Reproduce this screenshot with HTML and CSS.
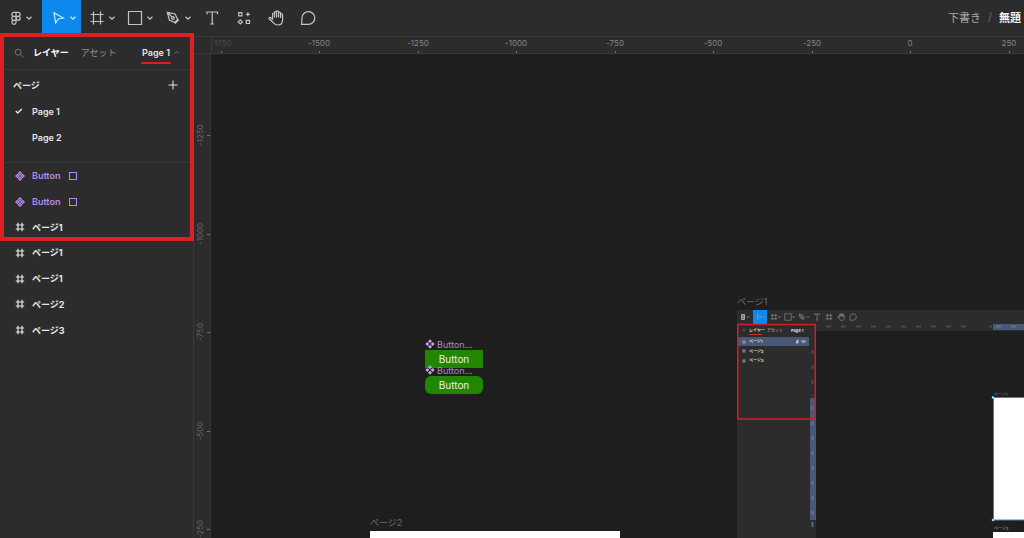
FILE: index.html
```html
<!DOCTYPE html>
<html lang="ja">
<head>
<meta charset="utf-8">
<meta name="viewport" content="width=device-width, initial-scale=1">
<title>無題</title>
<link rel="stylesheet" href="styles.css">
</head>
<body>
<svg class="defs" aria-hidden="true">
  <symbol id="chev" viewBox="0 0 8 8"><path d="M1.500 2.800 4 5.200l2.500-2.400"/></symbol>
  <symbol id="hash" viewBox="0 0 10 10"><path d="M3 .8v8.400M7 .8v8.400M.8 3h8.400M.8 7h8.400"/></symbol>
  <symbol id="comp" viewBox="0 0 10 10"><path class="solid" d="M5 .3 7 2.300 5 4.300 3 2.300zM5 5.700l2 2-2 2-2-2zM2.300 3l2 2-2 2-2-2zM7.700 3l2 2-2 2-2-2z"/></symbol>
  <symbol id="comp-open" viewBox="0 0 10 10"><path d="M5 .8 6.500 2.300 5 3.800 3.500 2.300zM5 6.200l1.500 1.500L5 9.200 3.500 7.700zM2.300 3.500 3.800 5 2.300 6.500.8 5zM7.700 3.500 9.200 5 7.700 6.500 6.200 5z"/></symbol>
  <symbol id="frame" viewBox="0 0 16 16"><path d="M4.500 1.500v13M11.500 1.500v13M1.500 4.500h13M1.500 11.500h13"/></symbol>
  <symbol id="cursor" viewBox="0 0 16 16"><path d="M4 2.700 13.300 8 8.400 9 5.700 13z"/></symbol>
  <symbol id="square" viewBox="0 0 16 16"><path d="M1.500 1.500h13v13h-13z"/></symbol>
  <symbol id="pen" viewBox="0 0 16 16"><path d="M2.300 2.300 10 4l2.700 5.300-3 3.200L4.400 10zM2.300 2.300 7 7M13.800 9.600 10 13.600"/><circle cx="8" cy="8" r="1.300"/></symbol>
  <symbol id="text" viewBox="0 0 16 16"><path d="M3 4.300V2h10.500v2.300M8.200 2v12M6.200 14h4"/></symbol>
  <symbol id="hand" viewBox="0 0 16 16"><path d="M4.600 9.600V4.100c0-1.300 2-1.300 2 0V2.300c0-1.300 2-1.300 2 0v-.5c0-1.300 2-1.300 2 0v1.300c0-1.300 2-1.300 2 0v1.700c0-1.300 2-1.300 2 0V10c0 3-2 5-4.600 5-2.600 0-4-1.300-5.200-3L1.300 9c-.7-1.300.8-2.200 1.800-1.200l1.500 1.800M6.600 3v4.500M8.600 2.300v5.200M10.600 3v4.500M12.600 4.500V8"/></symbol>
  <symbol id="bubble" viewBox="0 0 16 16"><path d="M1.600 14.400 2 8a6.400 6.400 0 1 1 6.400 6.400z"/></symbol>
</svg>

<header class="topbar">
  <nav class="tools" aria-label="ツール">
    <button class="tool first" aria-label="メインメニュー">
      <svg class="icon" viewBox="0 0 16 16"><path d="M8 2.300H5.800a2 2 0 0 0 0 4H8zM8 2.300h2.200a2 2 0 0 1 0 4H8zM8 6.300H5.800a2 2 0 0 0 0 4H8zM8 10.300H5.800a2 2 0 1 0 2.200 2z"/><circle cx="10.200" cy="8.300" r="2"/></svg>
      <svg class="chev"><use href="#chev"/></svg>
    </button>
    <button class="tool active" aria-label="移動" aria-pressed="true"><svg class="icon"><use href="#cursor"/></svg><svg class="chev"><use href="#chev"/></svg></button>
    <button class="tool" aria-label="フレーム"><svg class="icon"><use href="#frame"/></svg><svg class="chev"><use href="#chev"/></svg></button>
    <button class="tool" aria-label="長方形"><svg class="icon"><use href="#square"/></svg><svg class="chev"><use href="#chev"/></svg></button>
    <button class="tool" aria-label="ペン"><svg class="icon"><use href="#pen"/></svg><svg class="chev"><use href="#chev"/></svg></button>
    <button class="tool single" aria-label="テキスト"><svg class="icon"><use href="#text"/></svg></button>
    <button class="tool single" aria-label="リソース">
      <svg class="icon" viewBox="0 0 16 16"><path d="M2.700 2.700h3.200v3.200H2.700zM10.300 10.300h3.200v3.200h-3.200zM4.300 9.800l2.100 2.100-2.100 2.100-2.100-2.100zM11.900 2.300v4M9.900 4.300h4"/></svg>
    </button>
    <button class="tool single" aria-label="手のひら"><svg class="icon"><use href="#hand"/></svg></button>
    <button class="tool single" aria-label="コメント"><svg class="icon"><use href="#bubble"/></svg></button>
  </nav>
  <div class="crumbs"><a href="#drafts">下書き</a><span class="slash">/</span><strong>無題</strong></div>
</header>

<main class="work">
  <aside class="panel">
    <div class="tabs">
      <button class="search" aria-label="検索"><svg viewBox="0 0 10 10"><circle cx="4.200" cy="4.200" r="3"/><path d="m6.500 6.500 3 3"/></svg></button>
      <button class="tab current">レイヤー</button>
      <button class="tab">アセット</button>
      <button class="page-switch"><span class="marked">Page 1</span><svg class="up"><use href="#chev"/></svg></button>
    </div>
    <section class="pages">
      <div class="pages-head"><h2>ページ</h2><button class="add" aria-label="ページを追加"><svg viewBox="0 0 10 10"><path d="M5 .5v9M.5 5h9"/></svg></button></div>
      <ul>
        <li><a class="row" href="#page1"><svg class="mark" viewBox="0 0 10 10"><path d="m1.800 5 2 2 4-4"/></svg>Page 1</a></li>
        <li><a class="row" href="#page2"><span class="mark"></span>Page 2</a></li>
      </ul>
    </section>
    <ul class="layers">
      <li><a class="row purple" href="#b1"><svg class="mark"><use href="#comp-open"/></svg>Button<span class="swatch"></span></a></li>
      <li><a class="row purple" href="#b2"><svg class="mark"><use href="#comp-open"/></svg>Button<span class="swatch"></span></a></li>
      <li><a class="row jp" href="#f1"><svg class="mark"><use href="#hash"/></svg>ページ1</a></li>
      <li><a class="row jp" href="#f2"><svg class="mark"><use href="#hash"/></svg>ページ1</a></li>
      <li><a class="row jp" href="#f3"><svg class="mark"><use href="#hash"/></svg>ページ1</a></li>
      <li><a class="row jp" href="#f4"><svg class="mark"><use href="#hash"/></svg>ページ2</a></li>
      <li><a class="row jp" href="#f5"><svg class="mark"><use href="#hash"/></svg>ページ3</a></li>
    </ul>
  </aside>

  <div class="stage">
    <div class="corner"></div>
    <svg class="ruler-x" aria-hidden="true">
      <g class="ticks"><path d="M9.500 14v3M107.500 14v3M206.500 14v3M304.500 14v3M403.500 14v3M501.500 14v3M600.500 14v3M698.500 14v3M797.500 14v3"/></g>
      <text class="dim" x="9" y="9">-1750</text><text x="107" y="9">-1500</text><text x="206" y="9">-1250</text><text x="304" y="9">-1000</text><text x="403" y="9">-750</text><text x="501" y="9">-500</text><text x="600" y="9">-250</text><text x="698" y="9">0</text><text x="797" y="9">250</text>
    </svg>
    <svg class="ruler-y" aria-hidden="true">
      <g class="ticks"><path d="M13 81.500h3M13 180.500h3M13 278.500h3M13 377.500h3M13 475.500h3"/></g>
      <text transform="translate(9 81) rotate(-90)">-1250</text><text transform="translate(9 180) rotate(-90)">-1000</text><text transform="translate(9 278) rotate(-90)">-750</text><text transform="translate(9 377) rotate(-90)">-500</text><text transform="translate(9 475) rotate(-90)">-250</text>
    </svg>
    <div class="canvas">
      <div class="node component one"><span class="tag"><svg><use href="#comp"/></svg>Button...</span><button class="green">Button</button></div>
      <div class="node component two"><span class="tag"><svg><use href="#comp"/></svg>Button...</span><button class="green round">Button</button></div>
      <div class="node page-two"><span class="label">ページ2</span><div class="sheet"></div></div>
      <div class="node page-one"><span class="label">ページ1</span>
        <svg class="shot" viewBox="0 0 400 228" role="img" aria-label="レイヤーパネルの画面">
          <path fill="#1e1e1e" d="M0 0h400v228H0z"/>
          <path fill="#2c2c2c" d="M0 0h400v21H0zM0 21h79v207H0z"/>
          <path fill="#0d88ec" d="M16 0h14v14H16z"/>
          <g class="mini">
            <use href="#cursor" x="18" y="3" width="8" height="8"/>
            <use href="#frame" x="33" y="3" width="8" height="8"/>
            <use href="#square" x="47" y="3" width="8" height="8"/>
            <use href="#pen" x="61" y="3" width="8" height="8"/>
            <use href="#text" x="76" y="3" width="8" height="8"/>
            <use href="#frame" x="88" y="3" width="8" height="8"/>
            <use href="#hand" x="100" y="3" width="8" height="8"/>
            <use href="#bubble" x="112" y="3" width="8" height="8"/>
            <path d="M4.500 4.500h3v5h-3zM6 4.500v5M4.500 7h3"/>
          </g>
          <g class="mini-chev"><path d="m10 6.500 1 1 1-1M26.500 6.500l1 1 1-1M41.500 6.500l1 1 1-1M55.500 6.500l1 1 1-1M70 6.500l1 1 1-1"/></g>
          <path fill="#4a5878" d="M1 27h71v9H1zM73 88h6v122h-6zM256 14h144v6H256z"/>
          <path stroke="#484848" stroke-width="2" stroke-dasharray="5 10" d="M89 16.500h140M252 16.500h3"/>
          <path stroke="#63718f" stroke-width="2" stroke-dasharray="5 10" d="M259 16.500h140"/>
          <path stroke="#63718f" stroke-width="2" stroke-dasharray="4 11" d="M75.500 96v112"/>
          <path stroke="#484848" stroke-width="2" stroke-dasharray="4 11" d="M75.500 40v46"/>
          <path stroke="#527080" stroke-width="2" d="M75.500 212v5"/>
          <g class="mini-text">
            <circle cx="7" cy="20" r="1" fill="none" stroke="#777" stroke-width=".5"/>
            <text x="12" y="22">レイヤー</text><text x="30" y="22" fill="#888">アセット</text><text x="54" y="22">Page 1</text>
            <text x="12" y="33">ページ1</text><text x="12" y="43">ページ2</text><text x="12" y="52">ページ3</text>
            <use href="#hash" x="5" y="30" width="4" height="4"/><use href="#hash" x="5" y="39" width="4" height="4"/><use href="#hash" x="5" y="49" width="4" height="4"/>
            <path d="M59.500 31h1.500v2h-1.500zM61 29.500v1.500M64.500 31.500q2-2 4 0-2 2-4 0"/>
            <text x="257" y="86" fill="#45687f">ページ1</text><text x="257" y="220" fill="#777">ページ2</text>
          </g>
          <path fill="#fff" d="M256 88h144v122H256zM256 222h144v6H256z"/>
          <path fill="none" stroke="#3c88b4" d="M400 87.500H256.500v122.500H400"/>
          <path fill="#fff" stroke="#3c9bd4" stroke-width=".5" d="M255 86.500h2v2h-2zM255 209h2v2h-2z"/>
          <path fill="none" stroke="#d3242a" stroke-width="1" d="M12 24.500h13"/>
          <path fill="none" stroke="#cf2027" stroke-width="1.500" d="M.8 14.500h77.500v94.500H.8z"/>
        </svg>
      </div>
    </div>
  </div>
  <div class="callout"></div>
</main>
</body>
</html>
```
FILE: styles.css
```css
* { box-sizing: border-box; }

body {
  margin: 0;
  height: 100vh;
  display: flex;
  flex-direction: column;
  overflow: hidden;
  background: #1e1e1e;
  color: #e6e6e6;
  font-family: Inter, "Noto Sans CJK JP", sans-serif;
  font-size: 9px;
}

button {
  border: 0;
  padding: 0;
  background: none;
  color: inherit;
  font: inherit;
}

a { color: inherit; text-decoration: none; }
ul { margin: 0; padding: 0; list-style: none; }
svg { fill: none; stroke: currentColor; flex: none; }
.defs { position: absolute; width: 0; height: 0; }
.solid { fill: currentColor; stroke: none; }

.topbar {
  flex: none;
  display: flex;
  justify-content: space-between;
  height: 36px;
  background: #2c2c2c;
}

.tools { display: flex; }

.tool {
  display: flex;
  align-items: center;
  justify-content: flex-end;
  gap: 3px;
  width: 38px;
  padding-right: 3px;
  color: #c4c4c4;
}

.tool.first { width: 42px; padding-right: 9px; gap: 1px; }
.tool.active { width: 39px; padding-right: 4px; background: #0d88ec; color: #d4ecff; }
.tool.single { width: 32px; padding-right: 7px; }
.icon { width: 16px; height: 16px; stroke-width: 1.2; }
.chev { width: 8px; height: 8px; stroke-width: 1.3; }

.crumbs {
  display: flex;
  align-items: center;
  gap: 7px;
  padding: 0 3px 2px 0;
  color: #a8a8a8;
  font-size: 11px;
}

.crumbs strong { color: #f0f0f0; font-weight: 700; }
.slash { color: #6a6a6a; }

.work { position: relative; flex: 1; min-height: 0; display: flex; }

.panel {
  flex: none;
  width: 194px;
  background: #2c2c2c;
  border-right: 1px solid #383838;
}

.tabs {
  display: flex;
  align-items: center;
  height: 34px;
  padding: 0 13px 0 14px;
  border-bottom: 1px solid #383838;
}

.search { width: 19px; height: 10px; color: #777; text-align: left; }
.search svg { display: block; width: 10px; height: 10px; }
.tab { margin-right: 12px; color: #929292; }
.tab.current { color: #fff; font-weight: 700; }

.page-switch {
  display: flex;
  align-items: center;
  gap: 2px;
  margin-left: auto;
  font-weight: 600;
}

.marked { padding: 6px 1px 4px; border-bottom: 2px solid #d81f26; }
.up { width: 7px; height: 7px; color: #777; transform: rotate(180deg); }

.pages { padding: 2px 0 12px; border-bottom: 1px solid #383838; }

.pages-head {
  display: flex;
  align-items: center;
  justify-content: space-between;
  height: 26px;
  padding: 0 15px 0 13px;
}

.pages-head h2 { margin: 0; font-size: 9px; font-weight: 700; }
.add { width: 10px; height: 10px; }
.add svg { display: block; width: 10px; height: 10px; }

.row {
  display: flex;
  align-items: center;
  height: 26px;
  padding-left: 15px;
  font-weight: 600;
}

.layers {
  display: grid;
  grid-template-rows: repeat(7, 1fr);
  height: 180px;
}

.layers .row { height: 100%; }
.row.jp { font-weight: 700; }
.row.purple { color: #b78be8; }
.mark { width: 10px; height: 10px; margin-right: 7px; stroke-width: 1.2; }
.pages .mark { margin-right: 8px; margin-left: -1px; stroke-width: 1.4; }
.swatch { width: 8px; height: 8px; margin-left: 9px; border: 1px solid currentColor; }

.stage {
  flex: 1;
  min-width: 0;
  display: grid;
  grid-template-columns: 17px 1fr;
  grid-template-rows: 18px 1fr;
}

.corner, .ruler-x, .ruler-y { background: #2c2c2c; }
.corner { border-top: 1px solid #383838; border-bottom: 1px solid #383838; }

.ruler-x, .ruler-y {
  width: 100%;
  height: 100%;
  overflow: hidden;
}

.ruler-x { border: solid #383838; border-width: 1px 0 1px 1px; }
.ruler-y { border-right: 1px solid #383838; }
.ticks { stroke: #707070; }
.ruler-x text, .ruler-y text { fill: #858585; stroke: none; font-size: 8px; text-anchor: middle; }
.ruler-y text { fill: #686868; }
.ruler-x .dim { fill: #484848; }

.canvas { position: relative; overflow: hidden; }
.node { position: absolute; }
.component { left: 214px; width: 58px; }
.one { top: 284px; }
.two { top: 310px; }

.tag {
  display: flex;
  align-items: center;
  gap: 2px;
  height: 12px;
  color: #a68bc4;
  font-size: 9px;
}

.tag svg { width: 10px; height: 10px; color: #c3a2e6; }

.green {
  display: block;
  width: 100%;
  height: 18px;
  background: #218600;
  color: #e6f3e2;
  font-size: 10px;
}

.round { border-radius: 6px; }

.label {
  display: block;
  height: 16px;
  color: #6c6c6c;
  font-size: 9px;
  line-height: 16px;
}

.page-two { left: 159px; top: 461px; }
.sheet { width: 250px; height: 160px; background: #fff; }
.page-one { left: 526px; top: 240px; }
.shot { display: block; width: 400px; height: 228px; stroke: none; }
.mini { color: #aaa; stroke: #aaa; stroke-width: 1; }
.mini-chev { stroke: #999; stroke-width: 1; }
.mini-text { fill: #ddd; font-size: 4px; font-weight: 700; }
.mini-text use, .mini-text path { stroke: #ccc; fill: none; }

.callout {
  position: absolute;
  left: 0;
  top: -3px;
  width: 194px;
  height: 208px;
  border: 4px solid #dc2024;
  pointer-events: none;
}
```
